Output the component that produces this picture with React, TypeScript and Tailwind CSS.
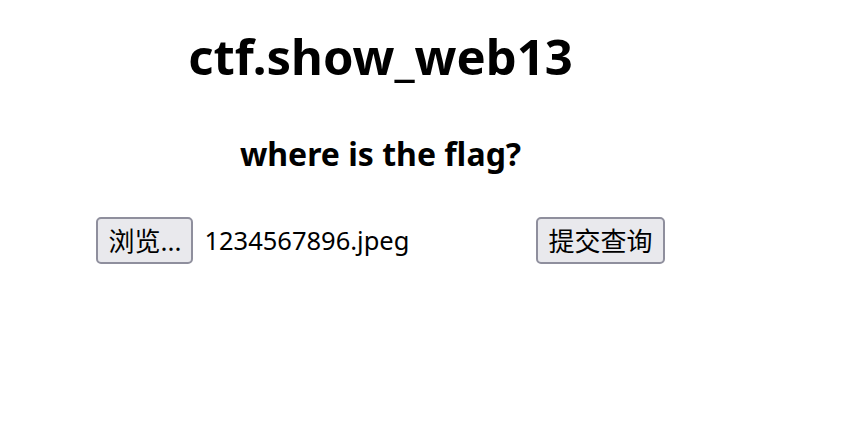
export default function App() {
  return (
    <div className="w-[761px] bg-white text-center text-black font-['Noto_Sans','Noto_Sans_CJK_SC',sans-serif]">
      <h1 className="pt-[23px] text-[49px] font-bold leading-[66px]">ctf.show_web13</h1>
      <h3 className="mt-[44px] text-[32px] font-bold leading-[42px]">where is the flag?</h3>
      <form className="mt-[42px] flex items-center justify-center">
        <div className="flex w-[440px] items-center gap-[11px]">
          <button
            type="button"
            className="h-[47px] rounded-[5px] border-2 border-[#8f8f9d] bg-[#e9e9ed] px-[10px] text-[26px] leading-none"
          >
            浏览...
          </button>
          <span className="text-[25.5px]">1234567896.jpeg</span>
        </div>
        <button
          type="submit"
          className="h-[47px] rounded-[5px] border-2 border-[#8f8f9d] bg-[#e9e9ed] px-[10px] text-[26px] leading-none"
        >
          提交查询
        </button>
      </form>
    </div>
  );
}
